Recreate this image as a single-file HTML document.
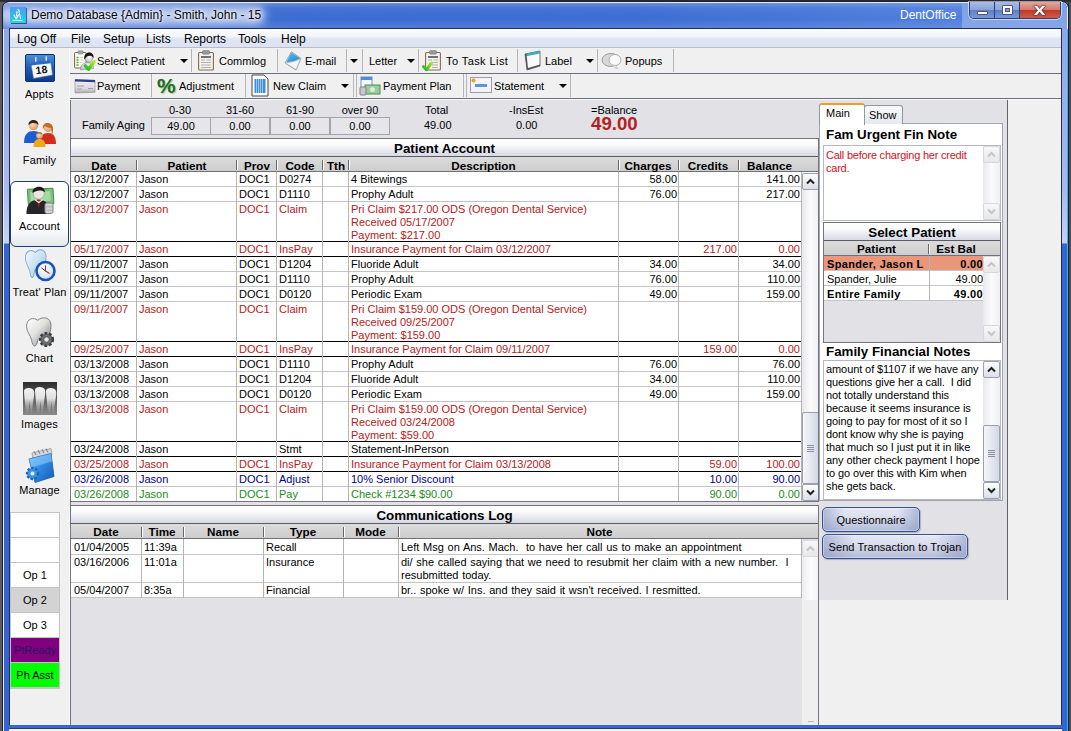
<!DOCTYPE html><html><head><meta charset="utf-8"><title>DentOffice</title><style>
*{box-sizing:border-box;margin:0;padding:0}
html,body{width:1071px;height:731px;overflow:hidden;background:#5c5c5c}
body{font-family:"Liberation Sans",Arial,sans-serif;font-size:11px;color:#000;position:relative}
.a{position:absolute}
.t{position:absolute;white-space:pre;line-height:13px}
.b{font-weight:bold}
.red{color:#b62020}.blue{color:#00008b}.green{color:#228b22}
.hl{position:absolute;height:1px;left:0;right:0}
.vl{position:absolute;width:1px}
.gt{position:absolute;left:0;right:0;text-align:center;font-weight:bold;font-size:13.33px;line-height:19px;background:linear-gradient(#ffffff 0%,#fafafc 35%,#d6d8e4 100%)}
.gh{position:absolute;left:0;right:0;background:linear-gradient(#dcdcdc,#cdcdcd);font-weight:bold;font-size:11.7px}
.hc{position:absolute;top:1px;text-align:center;line-height:16px;white-space:pre}
.hs{position:absolute;top:3px;width:2px;height:10px;border-left:1px solid #666;border-right:1px solid #fff}
.sb{position:absolute;width:17px;background:linear-gradient(90deg,#e8e8ec,#fbfbfd 50%,#f0f0f4)}
.sbb{position:absolute;left:0;width:17px;height:17px;border:1px solid #9aa0b0;border-radius:2px;background:linear-gradient(#fdfdfe,#dcdfe8)}
.sbb.dis{border-color:#d8d8dc;background:linear-gradient(#f8f8f8,#e8e8ea)}
.sbb svg{position:absolute;left:3px;top:4px}
.thumb{position:absolute;left:0;width:17px;border:1px solid #9aa0b0;border-radius:2px;background:linear-gradient(90deg,#f6f6fa,#d4d8e4)}
.btn{position:absolute;height:25px;border:1px solid #34548f;border-radius:5px;background:linear-gradient(90deg,rgba(140,152,196,.6) 0,rgba(200,206,230,0) 22%,rgba(200,206,230,0) 78%,rgba(140,152,196,.6) 100%),linear-gradient(#e6e8f2 0%,#dadded 40%,#b2bad6 100%);text-align:center;line-height:24px;font-size:11px;letter-spacing:.05px;box-shadow:inset 0 0 0 1px rgba(255,255,255,.35),1px 1px 1px rgba(110,120,160,.45)}
.tb{position:absolute;height:25px;left:70px;right:10px;background:#f0f0f0;border-bottom:1px solid #687080;box-shadow:0 1px 0 #fafafa}
.tsep{position:absolute;top:1px;width:1px;height:23px;background:#b4b4bc}
.tt{position:absolute;top:6px;white-space:pre;line-height:13px;font-size:11px}
.dd{position:absolute;top:10px;width:0;height:0;border-left:4px solid transparent;border-right:4px solid transparent;border-top:4px solid #000}
.ml{position:absolute;left:0;width:59px;text-align:center;font-size:11px;letter-spacing:.15px;line-height:13px;white-space:pre}
.lc{position:absolute;left:1px;width:48px;height:25px;border-bottom:1px solid #c4c4c4;text-align:center;line-height:25px;font-size:11px;background:#fff}
</style></head><body>
<div class="a" style="left:0;top:0;width:1071px;height:2px;background:linear-gradient(#262626,#3c3c3c)"></div>
<div class="a" style="left:1068px;top:2px;width:3px;height:729px;background:linear-gradient(90deg,#1c2038,#4a4a4e 40%,#545458)"></div>
<div class="a" style="left:2px;top:1px;width:1067px;height:735px;border-radius:7px 7px 0 0;background:#3464d2;border:1px solid #161e3e;box-shadow:0 0 0 1px #e6ecfb inset"></div>
<div class="a" style="left:3px;top:3px;width:1064px;height:26px;border-radius:6px 6px 0 0;background:linear-gradient(90deg,#4672d4 0%,#3b6bd1 30%,#3d6dd3 60%,#4c7cdc 85%,#5685e0 100%)"></div>
<div class="a" style="left:3px;top:3px;width:1064px;height:26px;border-radius:6px 6px 0 0;background:linear-gradient(rgba(255,255,255,.22) 0,rgba(255,255,255,.05) 20%,rgba(255,255,255,0) 60%,rgba(255,255,255,.12) 100%)"></div>
<div class="a" style="left:3px;top:3px;width:300px;height:26px;overflow:hidden;border-radius:6px 0 0 0"><div class="a" style="left:-6px;top:3px;width:268px;height:19px;border-radius:9px;background:rgba(255,255,255,.66);filter:blur(5px)"></div></div>
<div class="a" style="left:962px;top:3px;width:105px;height:26px;border-radius:0 6px 0 0;background:linear-gradient(#7da2e6,#86a6e8)"></div>
<div class="a" style="left:4px;top:29px;width:5px;height:702px;background:linear-gradient(#8ea8e8 0,#a9baec 160px,#c6d2f3 214px,#3464d2 215px,#3464d2 100%)"></div>
<div class="a" style="left:1062px;top:29px;width:5px;height:702px;background:linear-gradient(#8ea8e8 0,#a9baec 160px,#c6d2f3 214px,#3464d2 215px,#3464d2 100%)"></div>
<div class="a" style="left:1067px;top:29px;width:1px;height:702px;background:#3cb4ee"></div>
<div class="a" style="left:9px;top:725px;width:1053px;height:3px;background:#3468d2"></div>
<div class="a" style="left:9px;top:728px;width:1053px;height:3px;background:#f2f2f2;border-top:1px solid #2a3a5a"></div>
<svg class="a" style="left:10px;top:7px;box-shadow:1px 1px 0 rgba(30,40,80,.7)" width="16" height="16" viewBox="0 0 16 16"><defs><linearGradient id="ig" x1="0" y1="0" x2="0" y2="1"><stop offset="0" stop-color="#4c9ef0"/><stop offset=".5" stop-color="#34b4f0"/><stop offset="1" stop-color="#12dee8"/></linearGradient></defs><rect width="16" height="16" fill="url(#ig)"/><path d="M8 2.5c1.2.6 1.6 1.6 1 3M7 4.5c-.6 2-.6 4 .4 6M4 8l2.2 4 2.6-4.5M9.5 6.500l1 5M3 13.500h9" stroke="#fff" stroke-width="1.100" fill="none" stroke-linecap="round"/></svg>
<div class="t" style="left:31px;top:8px;font-size:12px;line-height:15px;text-shadow:0 0 6px #fff,0 0 3px #fff">Demo Database {Admin} - Smith, John - 15</div>
<div class="t" style="left:900px;top:8px;font-size:12px;line-height:15px;color:#fff">DentOffice</div>
<div class="a" style="left:969px;top:2px;width:92px;height:17px;border:1px solid #2a3f70;border-top:none;border-radius:0 0 5px 5px;overflow:hidden;box-shadow:0 0 0 1px rgba(255,255,255,.55)"><div class="a" style="left:0;top:0;width:25px;height:17px;background:linear-gradient(#a9bce6 0,#8aa3dc 45%,#5d7fcb 50%,#7f9cdc 100%);border-right:1px solid #2a3f70"></div><div class="a" style="left:25px;top:0;width:25px;height:17px;background:linear-gradient(#a9bce6 0,#8aa3dc 45%,#5d7fcb 50%,#7f9cdc 100%);border-right:1px solid #2a3f70"></div><div class="a" style="left:50px;top:0;width:42px;height:17px;background:linear-gradient(#e3a79c 0,#d27a6b 45%,#c03a28 50%,#d4604a 100%)"></div><div class="a" style="left:7px;top:9px;width:11px;height:4px;background:#fff;border:1px solid #505870;border-radius:1px"></div><div class="a" style="left:32px;top:3px;width:11px;height:10px;border:1px solid #505870;background:#fff;border-radius:1px"></div><div class="a" style="left:35px;top:6px;width:5px;height:4px;border:1px solid #505870;background:#7f9cdc"></div><div class="t b" style="left:65px;top:-1.5px;font-size:17px;line-height:18px;color:#fff;transform:scaleX(1.25);transform-origin:50% 50%;-webkit-text-stroke:.7px #4a2626;paint-order:stroke fill;text-shadow:0 0 2px #5a1a1a">x</div></div>
<div class="a" style="left:9px;top:28px;width:1053px;height:697px;background:#f0f0f0;border:1px solid #222c56;border-bottom:none"></div>
<div class="a" style="left:10px;top:29px;width:1051px;height:19px;background:linear-gradient(#fbfcfe 0,#f3f5fb 40%,#dfe5f3 55%,#dde3f2 100%);border-bottom:1px solid #b8bccc"></div>
<div class="t" style="left:17px;top:32px;font-size:12px;line-height:15px">Log Off</div>
<div class="t" style="left:71px;top:32px;font-size:12px;line-height:15px">File</div>
<div class="t" style="left:103px;top:32px;font-size:12px;line-height:15px">Setup</div>
<div class="t" style="left:146px;top:32px;font-size:12px;line-height:15px">Lists</div>
<div class="t" style="left:184px;top:32px;font-size:12px;line-height:15px">Reports</div>
<div class="t" style="left:238px;top:32px;font-size:12px;line-height:15px">Tools</div>
<div class="t" style="left:281px;top:32px;font-size:12px;line-height:15px">Help</div>
<div class="a" id="mod" style="left:10px;top:48px;width:60px;height:677px;background:#f0f0f0">
<div class="a" style="left:0px;top:133px;width:59px;height:66px;border:1px solid #1c3c78;border-radius:6px;background:linear-gradient(#ffffff 0,#ffffff 70%,#e4e6ea 100%)"></div>
<div class="ml" style="top:40px">Appts</div>
<div class="ml" style="top:106px">Family</div>
<div class="ml" style="top:172px">Account</div>
<div class="ml" style="top:238px">Treat&#x27; Plan</div>
<div class="ml" style="top:304px">Chart</div>
<div class="ml" style="top:370px">Images</div>
<div class="ml" style="top:436px">Manage</div>
<svg class="a" style="left:0;top:0" width="60" height="460" viewBox="0 0 60 460"><defs><linearGradient id="ca" x1="0" y1="0" x2="0" y2="1"><stop offset="0" stop-color="#4a90dc"/><stop offset=".5" stop-color="#1c5cb8"/><stop offset="1" stop-color="#0c3a8c"/></linearGradient><linearGradient id="tb" x1="0" y1="0" x2="1" y2="1"><stop offset="0" stop-color="#f4fbff"/><stop offset=".55" stop-color="#c4def2"/><stop offset="1" stop-color="#8cb8dc"/></linearGradient><linearGradient id="tg" x1="0" y1="0" x2="1" y2="1"><stop offset="0" stop-color="#ffffff"/><stop offset=".45" stop-color="#e2e2e0"/><stop offset="1" stop-color="#767674"/></linearGradient><linearGradient id="xr" x1="0" y1="0" x2="0" y2="1"><stop offset="0" stop-color="#2c2c2c"/><stop offset=".5" stop-color="#5c5c5c"/><stop offset="1" stop-color="#8a8a8a"/></linearGradient><linearGradient id="xt" x1="0" y1="0" x2="0" y2="1"><stop offset="0" stop-color="#f4f4f4"/><stop offset=".45" stop-color="#e0e0e0"/><stop offset="1" stop-color="#9a9a9a" stop-opacity=".3"/></linearGradient><linearGradient id="mf" x1="0" y1="0" x2="1" y2="1"><stop offset="0" stop-color="#6cc0f8"/><stop offset=".5" stop-color="#2c88e0"/><stop offset="1" stop-color="#1458b0"/></linearGradient><radialGradient id="ck" cx=".4" cy=".35" r=".7"><stop offset="0" stop-color="#ffffff"/><stop offset="1" stop-color="#c8dcf4"/></radialGradient><radialGradient id="sk" cx=".4" cy=".35" r=".7"><stop offset="0" stop-color="#f8d8b8"/><stop offset="1" stop-color="#d49868"/></radialGradient></defs><g transform="translate(15,6)"><rect x=".5" y=".5" width="29" height="27" rx="1.500" fill="url(#ca)" stroke="#0a3278"/><path d="M5.500 7.500l20-2 2 15.500-19 3.500z" fill="#f6f8fb" stroke="#5a6a88" stroke-width=".6"/><path d="M5.500 7.500l20-2 .5 3.800-20 2.200z" fill="#2d6cc4"/><text x="16.500" y="19.500" font-size="10.500" font-weight="bold" text-anchor="middle" font-family="Liberation Sans,sans-serif" fill="#111" transform="rotate(-7 16 16)">18</text><rect x="10" y="3" width="1.500" height="5" rx=".7" fill="#dfe6f2"/><rect x="20.500" y="2" width="1.500" height="5" rx=".7" fill="#dfe6f2"/></g><g transform="translate(13,70)"><path d="M1 25c0-9 4-12 9.500-12s9.500 3 9.500 12z" fill="#1c5cd0"/><circle cx="10.500" cy="7.500" r="4.800" fill="url(#sk)"/><path d="M5.500 7c-.5-6 10-7 10 0-2-2.500-7-3-10 0z" fill="#3a2418"/><path d="M17 26c0-8 3-11 8-11s8 3 8 11z" fill="#d42c1c"/><circle cx="25" cy="9.500" r="4.500" fill="url(#sk)"/><path d="M20 11c-1.500-8 11-8 10 1 0 3-1 5-1 5l-1-7c-2.500 0-5-1-6-2z" fill="#c86c20"/><path d="M10.500 29c0-6 2.500-8 6-8s6 2 6 8z" fill="#f0a818"/><circle cx="16.500" cy="17.500" r="3.300" fill="url(#sk)"/><path d="M13.500 16.500c0-3.500 6-3.500 6 0-1.500-1.300-4.500-1.300-6 0z" fill="#b06020"/></g><g transform="translate(14.500,136.500) scale(.95)"><path d="M3 5l27-1 1 16-27 1z" fill="#7cc07c" stroke="#3c8c4c"/><path d="M6 8l21-1 .7 10-21 1z" fill="#a4d8a4"/><path d="M2 31c0-11 5-15 12.500-15S27 20 27 31z" fill="#26262a"/><circle cx="15" cy="9.500" r="5.800" fill="#ece6e2" stroke="#8a8480" stroke-width=".5"/><path d="M8.500 9c-1-8 13-9 13-1-3-2.500-9-2.500-13 1z" fill="#1c1c1c"/><path d="M13.300 16l1.700 9 1.700-9z" fill="#b81c1c"/><path d="M11 16l4 3 4-3" stroke="#e8e8e8" stroke-width="1.200" fill="none"/><rect x="21.500" y="19.500" width="8.500" height="11" rx="2" fill="#d4d4d8" stroke="#808088"/><path d="M21.500 23.500h8.500M21.500 27h8.500" stroke="#9a9aa2" stroke-width=".7"/></g><g transform="translate(12,201)"><path transform="translate(2.500,0) scale(.9,1.130)" d="M1 8C1 1 8 0 12 3c4-4 12-3 12 4 0 5-2 8-3 13-1 7-4 7-5 0-1-4-4-4-5 0-1 7-4 7-5 0C5 16 1 13 1 8z" fill="url(#tb)" stroke="#7ca8cc" stroke-width=".9"/><circle cx="23.500" cy="22" r="9" fill="url(#ck)" stroke="#1c50bc" stroke-width="2.600"/><path d="M23.500 16.500v5.500l4 2.500" stroke="#a03030" stroke-width="1.100" fill="none"/><path d="M23.500 22l-4-3" stroke="#333" stroke-width="1" fill="none"/></g><g transform="translate(15,268)"><path transform="translate(-.5,0) scale(1.020,1.060)" d="M2 10C2 2 9 1 13 4c5-4 13-3 13 5 0 5-2 9-3 14-1 7-5 7-6 0-.6-3-3-3-4 0-1 7-5 7-6 0C6 18 2 15 2 10z" fill="url(#tg)" stroke="#7c7c7c" stroke-width=".9"/><circle cx="21.500" cy="23.500" r="6.300" fill="#6c7074" stroke="#3c4044" stroke-width="2.600" stroke-dasharray="2.600 1.900"/><circle cx="21.500" cy="23.500" r="2.600" fill="#e8e8e8" stroke="#3c4044" stroke-width=".6"/></g><g transform="translate(13,334)"><rect width="34" height="33" fill="url(#xr)"/><path d="M1 9c0-4 9-4 10 0 1 4-1 8-2 22H7.500L6.500 19 5.500 31H3C2 19 1 13 1 9zM12 8c0-4 9-4 10 0 1 4-1 8-2 23h-1.500L17.500 19l-1 12H14c-1-12-2-19-2-23zM23 9c0-4 9-4 10 0 1 4-1 8-2 22h-1.500L28.500 19l-1 12H25c-1-12-2-18-2-22z" fill="url(#xt)"/></g><g transform="translate(14,400)"><path d="M8 5l19-4.500 1 6-19 5z" fill="#d4d8dc" stroke="#8a9098" stroke-width=".7"/><path d="M10 3l2 4M14 2l2 4M18 1.200l2 4M22 .5l2 4" stroke="#70767e" stroke-width=".9"/><path d="M5 11l22-5.500 3 23-19 6z" fill="url(#mf)" stroke="#1458a8" stroke-width=".8"/><path d="M5 11l22-5.500 1 8-21 6z" fill="#8cd0fc" opacity=".55"/><circle cx="8.500" cy="25.500" r="5.500" fill="#3c94e4" stroke="#1c64b8" stroke-width="2.400" stroke-dasharray="2.300 1.700"/><circle cx="8.500" cy="25.500" r="2" fill="#dcecfa"/></g></svg>
<div class="a" style="left:0px;top:464px;width:50px;height:177px;border:1px solid #c4c4c4;background:#fff"></div>
<div class="lc" style="top:465px;background:#fff;color:#000"></div>
<div class="lc" style="top:490px;background:#fff;color:#000"></div>
<div class="lc" style="top:515px;background:#fff;color:#000">Op 1</div>
<div class="lc" style="top:540px;background:#d3d3d3;color:#000">Op 2</div>
<div class="lc" style="top:565px;background:#fff;color:#000">Op 3</div>
<div class="lc" style="top:590px;background:#800080;color:#2a1460">PtReady</div>
<div class="lc" style="top:615px;background:#00ff00;color:#000">Ph Asst</div>
</div>
<div class="a" style="left:69px;top:48px;width:2px;height:677px;background:linear-gradient(90deg,#fafafa 0,#fafafa 50%,#74747e 50%)"></div>
<div class="tb" style="top:48px;height:26px"></div><div class="tb" style="top:74px"></div>
<svg class="a" style="left:74px;top:50px" width="22" height="22" viewBox="0 0 22 22"><defs><linearGradient id="ck1" x1="0" y1="1" x2="1" y2="0"><stop offset="0" stop-color="#18b428"/><stop offset="1" stop-color="#b0ec20"/></linearGradient><radialGradient id="fc" cx=".6" cy=".4" r=".7"><stop offset="0" stop-color="#ffffff"/><stop offset="1" stop-color="#b8b8bc"/></radialGradient></defs><rect x=".6" y="2.500" width="11.500" height="15.500" rx=".8" fill="#fbfbf8" stroke="#8a5c3c" stroke-width="1"/><rect x="4" y=".8" width="5" height="3.200" rx=".8" fill="#a8a8a8" stroke="#707070" stroke-width=".5"/><path d="M2.500 7.500h2M2.500 10h2M2.500 12.500h2M2.500 15h2" stroke="#30c030" stroke-width="1.300"/><path d="M5.500 7.500h4M5.500 10h4M5.500 12.500h3" stroke="#c8c8c8" stroke-width=".8"/><path d="M6.500 20c0-5 3-7.500 7-7.500s6 2 6 6z" fill="url(#fc)" stroke="#8c8c90" stroke-width=".6"/><ellipse cx="14.800" cy="7.800" rx="3.800" ry="4.600" fill="url(#fc)" stroke="#77777c" stroke-width=".5"/><path d="M10.400 9.500c-1.600-9 10.200-9.400 9.200-1.200-.8-2-2.200-2.800-4-2.600-2.400.2-3.600 1.400-5.200 3.800z" fill="#141414"/><path d="M11.500 15.800l3 3.400 5.600-7.400" stroke="url(#ck1)" stroke-width="3.400" fill="none" stroke-linecap="round" stroke-linejoin="round"/></svg>
<div class="tt" style="left:97px;top:55px">Select Patient</div>
<div class="dd" style="left:180px;top:59px"></div>
<div class="tsep" style="left:191px;top:49px"></div>
<svg class="a" style="left:198px;top:50px" width="16" height="21" viewBox="0 0 16 21"><rect x=".6" y="2.500" width="14.800" height="17.500" rx="1" fill="#f2f2ee" stroke="#8a6a48" stroke-width="1.100"/><rect x="4.500" y=".6" width="7" height="3.600" rx="1" fill="#9a9a9a" stroke="#6a6a6a" stroke-width=".5"/><rect x="3" y="6" width="10" height="2" fill="#707070"/><path d="M3 10h4M8.500 10h4.500M3 12.500h10M3 15h10M3 17.500h10" stroke="#a8a8a8" stroke-width=".9"/></svg>
<div class="tt" style="left:219px;top:55px">Commlog</div>
<div class="tsep" style="left:277px;top:49px"></div>
<svg class="a" style="left:284px;top:51px" width="18" height="20" viewBox="0 0 18 20"><defs><linearGradient id="em" x1="0" y1="0" x2="1" y2="1"><stop offset="0" stop-color="#58c0f4"/><stop offset="1" stop-color="#1c84d4"/></linearGradient></defs><path d="M7.500 .8L17 7.500 12 19 1 12z" fill="#eef0f3" stroke="#8c949c" stroke-width=".9"/><path d="M7.500 1.500L16 7.500 9.500 11 2.500 11z" fill="url(#em)"/><path d="M1.500 12L9.500 10.500 16.500 8 12 18.500z" fill="#f4f5f7" stroke="#a8aeb6" stroke-width=".6"/><path d="M1.500 12l8 -1.500 7-2.500" fill="none" stroke="#b8bec6" stroke-width=".7"/></svg>
<div class="tt" style="left:305px;top:55px">E-mail</div>
<div class="tsep" style="left:346px;top:49px"></div>
<div class="dd" style="left:350px;top:59px"></div>
<div class="tsep" style="left:362px;top:49px"></div>
<div class="tt" style="left:369px;top:55px">Letter</div>
<div class="dd" style="left:407px;top:59px"></div>
<div class="tsep" style="left:418px;top:49px"></div>
<svg class="a" style="left:421px;top:50px" width="20" height="22" viewBox="0 0 20 22"><defs><linearGradient id="ck2" x1="0" y1="1" x2="1" y2="0"><stop offset="0" stop-color="#18b428"/><stop offset="1" stop-color="#a8e820"/></linearGradient></defs><rect x="4.600" y="2.500" width="14.800" height="17.500" rx="1" fill="#f2f2ee" stroke="#8a6a48" stroke-width="1.100"/><rect x="8.500" y=".6" width="7" height="3.600" rx="1" fill="#9a9a9a" stroke="#6a6a6a" stroke-width=".5"/><rect x="7" y="6" width="10" height="2" fill="#707070"/><path d="M7 10h4M12.500 10h4.500M11 12.500h6M11 15h6M11 17.500h6" stroke="#a8a8a8" stroke-width=".9"/><path d="M2.500 16.500l3 3.200 5-6.700" stroke="url(#ck2)" stroke-width="3" fill="none" stroke-linecap="round" stroke-linejoin="round"/></svg>
<div class="tt" style="left:446px;top:55px"><span style="letter-spacing:.42px">To Task List</span></div>
<div class="tsep" style="left:517px;top:49px"></div>
<svg class="a" style="left:522px;top:49px" width="22" height="23" viewBox="0 0 22 23"><path d="M3 5l15-3v15l-13 4z" fill="#fbfbfd" stroke="#70747c"/><path d="M3 5l15-3v2.500l-15 3z" fill="#3cb0b8"/><path d="M3 5l2 16 13-4v-1.500l-12 3.500-1.500-14z" fill="#555"/></svg>
<div class="tt" style="left:545px;top:55px">Label</div>
<div class="dd" style="left:586px;top:59px"></div>
<div class="tsep" style="left:597px;top:49px"></div>
<svg class="a" style="left:601px;top:52px" width="22" height="18" viewBox="0 0 22 18"><ellipse cx="10" cy="8" rx="9" ry="6.500" fill="#d8d8d8" stroke="#9a9a9a"/><ellipse cx="14" cy="8" rx="6" ry="5.500" fill="#f8f8f8" stroke="#b0b0b0"/><path d="M14 13l3 4-6-3z" fill="#f0f0f0" stroke="#b0b0b0" stroke-width=".6"/></svg>
<div class="tt" style="left:625px;top:55px">Popups</div>
<div class="tsep" style="left:673px;top:49px"></div>
<svg class="a" style="left:74px;top:78px" width="22" height="16" viewBox="0 0 22 16"><defs><linearGradient id="pg" x1="0" y1="0" x2="0" y2="1"><stop offset="0" stop-color="#f0f0f2"/><stop offset=".7" stop-color="#d8d8da"/><stop offset="1" stop-color="#a8a8ac"/></linearGradient></defs><path d="M1 1.500l20 .8v12l-20 .7z" fill="url(#pg)" stroke="#8c8c94" stroke-width=".6"/><path d="M1 1.300l20 .8v2.200l-20-.8z" fill="#2c3c94"/><path d="M3 8h7M3 11h5M14 10.500h5" stroke="#a0a0a8" stroke-width="1"/></svg>
<div class="tt" style="left:97px;top:80px">Payment</div>
<div class="tsep" style="left:151px;top:74px"></div>
<div class="t b" style="left:157px;top:74px;font-size:21px;line-height:23px;color:#1c6c1c;text-shadow:1px 1px 1px #a8c8a8">%</div>
<div class="tt" style="left:179px;top:80px">Adjustment</div>
<div class="tsep" style="left:245px;top:74px"></div>
<svg class="a" style="left:251px;top:74px" width="18" height="23" viewBox="0 0 18 23"><path d="M1 1h12l4 4v17H1z" fill="#fff" stroke="#444"/><rect x="3.500" y="5" width="11" height="14" fill="#3c8ce0"/><path d="M5.500 5v14M7.500 5v14M9.500 5v14M11.500 5v14" stroke="#b8d8f8" stroke-width=".8"/></svg>
<div class="tt" style="left:273px;top:80px">New Claim</div>
<div class="dd" style="left:341px;top:84px"></div>
<div class="tsep" style="left:353px;top:74px"></div>
<div class="tsep" style="left:356px;top:74px"></div>
<svg class="a" style="left:359px;top:75px" width="22" height="21" viewBox="0 0 22 21"><rect x="2" y="2" width="11" height="13" fill="#f4f8fc" stroke="#7890b0"/><rect x="2" y="2" width="11" height="3" fill="#4c8cd8"/><rect x="6" y="10" width="15" height="9" fill="#9ccc9c" stroke="#4c8c5c"/><circle cx="13.500" cy="14.500" r="2.500" fill="#d8ecd8"/><rect x="1" y="12" width="6" height="8" rx="1" fill="#c8c8cc" stroke="#808088"/></svg>
<div class="tt" style="left:383px;top:80px">Payment Plan</div>
<div class="tsep" style="left:463px;top:74px"></div>
<div class="tsep" style="left:466px;top:74px"></div>
<svg class="a" style="left:470px;top:77px" width="22" height="17" viewBox="0 0 22 17"><rect x=".5" y=".5" width="21" height="15" fill="#f4f4f6" stroke="#9a9ea8"/><rect x="5" y="7" width="12" height="3" fill="#5c94e0"/><circle cx="3.500" cy="3.500" r="2" fill="#f0a020"/></svg>
<div class="tt" style="left:494px;top:80px">Statement</div>
<div class="dd" style="left:559px;top:84px"></div>
<div class="tsep" style="left:570px;top:74px"></div>
<div class="a" style="left:71px;top:100px;width:937px;height:500px;background:#e1e1e6;border-right:1.500px solid #62626e"></div>
<div class="t" style="left:150px;width:60px;text-align:center;top:104px">0-30</div>
<div class="t" style="left:210px;width:60px;text-align:center;top:104px">31-60</div>
<div class="t" style="left:270px;width:60px;text-align:center;top:104px">61-90</div>
<div class="t" style="left:330px;width:60px;text-align:center;top:104px">over 90</div>
<div class="t" style="left:151px;width:60px;height:18px;top:117px;text-align:center;line-height:16px;border:1px solid #a4a4ac;background:#e6e6ea">49.00</div>
<div class="t" style="left:210px;width:60px;height:18px;top:117px;text-align:center;line-height:16px;border:1px solid #a4a4ac;background:#e6e6ea">0.00</div>
<div class="t" style="left:270px;width:60px;height:18px;top:117px;text-align:center;line-height:16px;border:1px solid #a4a4ac;background:#e6e6ea">0.00</div>
<div class="t" style="left:330px;width:60px;height:18px;top:117px;text-align:center;line-height:16px;border:1px solid #a4a4ac;background:#e6e6ea">0.00</div>
<div class="t" style="left:82px;top:119px">Family Aging</div>
<div class="t" style="left:425px;top:104px">Total</div><div class="t" style="left:424px;top:119px">49.00</div>
<div class="t" style="left:509px;top:104px">-InsEst</div><div class="t" style="left:516px;top:119px">0.00</div>
<div class="t" style="left:591px;top:104px">=Balance</div><div class="t b" style="left:591px;top:113px;font-size:18.67px;line-height:22px;color:#b22222">49.00</div>
<div class="a" id="acct" style="left:70px;top:138px;width:749px;height:364px;background:#fff;border:1px solid #74747e;overflow:hidden">
<div class="gt" style="top:0;height:18px;border-bottom:1px solid #5c5c66">Patient Account</div>
<div class="gh" style="top:18px;height:15px;border-bottom:1px solid #70707a">
<div class="hc" style="left:0px;width:66px">Date</div>
<div class="hs" style="left:65px"></div>
<div class="hc" style="left:66px;width:100px">Patient</div>
<div class="hs" style="left:165px"></div>
<div class="hc" style="left:166px;width:40px">Prov</div>
<div class="hs" style="left:205px"></div>
<div class="hc" style="left:206px;width:46px">Code</div>
<div class="hs" style="left:251px"></div>
<div class="hc" style="left:252px;width:26px">Tth</div>
<div class="hs" style="left:277px"></div>
<div class="hc" style="left:278px;width:269px">Description</div>
<div class="hs" style="left:547px"></div>
<div class="hc" style="left:547px;width:60px">Charges</div>
<div class="hs" style="left:607px"></div>
<div class="hc" style="left:607px;width:60px">Credits</div>
<div class="hs" style="left:667px"></div>
<div class="hc" style="left:667px;width:63px">Balance</div>
</div>
<div class="a " style="left:0;top:33px;width:731px;height:15px;border-bottom:1px solid #c4c4c4">
<div class="t" style="left:3px;top:1px">03/12/2007</div>
<div class="t" style="left:68px;top:1px">Jason</div>
<div class="t" style="left:168px;top:1px">DOC1</div>
<div class="t" style="left:208px;top:1px">D0274</div>
<div class="t" style="left:280px;top:1px">4 Bitewings</div>
<div class="t" style="left:547px;width:59px;text-align:right;top:1px">58.00</div>
<div class="t" style="left:667px;width:62px;text-align:right;top:1px">141.00</div>
</div>
<div class="a " style="left:0;top:48px;width:731px;height:15px;border-bottom:1px solid #c4c4c4">
<div class="t" style="left:3px;top:1px">03/12/2007</div>
<div class="t" style="left:68px;top:1px">Jason</div>
<div class="t" style="left:168px;top:1px">DOC1</div>
<div class="t" style="left:208px;top:1px">D1110</div>
<div class="t" style="left:280px;top:1px">Prophy Adult</div>
<div class="t" style="left:547px;width:59px;text-align:right;top:1px">76.00</div>
<div class="t" style="left:667px;width:62px;text-align:right;top:1px">217.00</div>
</div>
<div class="a red" style="left:0;top:63px;width:731px;height:40px;border-bottom:1px solid #000">
<div class="t" style="left:3px;top:1px">03/12/2007</div>
<div class="t" style="left:68px;top:1px">Jason</div>
<div class="t" style="left:168px;top:1px">DOC1</div>
<div class="t" style="left:208px;top:1px">Claim</div>
<div class="t" style="left:280px;top:1px">Pri Claim $217.00 ODS (Oregon Dental Service)
Received 05/17/2007
Payment: $217.00</div>
</div>
<div class="a red" style="left:0;top:103px;width:731px;height:15px;border-bottom:1px solid #000">
<div class="t" style="left:3px;top:1px">05/17/2007</div>
<div class="t" style="left:68px;top:1px">Jason</div>
<div class="t" style="left:168px;top:1px">DOC1</div>
<div class="t" style="left:208px;top:1px">InsPay</div>
<div class="t" style="left:280px;top:1px">Insurance Payment for Claim 03/12/2007</div>
<div class="t" style="left:607px;width:59px;text-align:right;top:1px">217.00</div>
<div class="t" style="left:667px;width:62px;text-align:right;top:1px">0.00</div>
</div>
<div class="a " style="left:0;top:118px;width:731px;height:15px;border-bottom:1px solid #c4c4c4">
<div class="t" style="left:3px;top:1px">09/11/2007</div>
<div class="t" style="left:68px;top:1px">Jason</div>
<div class="t" style="left:168px;top:1px">DOC1</div>
<div class="t" style="left:208px;top:1px">D1204</div>
<div class="t" style="left:280px;top:1px">Fluoride Adult</div>
<div class="t" style="left:547px;width:59px;text-align:right;top:1px">34.00</div>
<div class="t" style="left:667px;width:62px;text-align:right;top:1px">34.00</div>
</div>
<div class="a " style="left:0;top:133px;width:731px;height:15px;border-bottom:1px solid #c4c4c4">
<div class="t" style="left:3px;top:1px">09/11/2007</div>
<div class="t" style="left:68px;top:1px">Jason</div>
<div class="t" style="left:168px;top:1px">DOC1</div>
<div class="t" style="left:208px;top:1px">D1110</div>
<div class="t" style="left:280px;top:1px">Prophy Adult</div>
<div class="t" style="left:547px;width:59px;text-align:right;top:1px">76.00</div>
<div class="t" style="left:667px;width:62px;text-align:right;top:1px">110.00</div>
</div>
<div class="a " style="left:0;top:148px;width:731px;height:15px;border-bottom:1px solid #c4c4c4">
<div class="t" style="left:3px;top:1px">09/11/2007</div>
<div class="t" style="left:68px;top:1px">Jason</div>
<div class="t" style="left:168px;top:1px">DOC1</div>
<div class="t" style="left:208px;top:1px">D0120</div>
<div class="t" style="left:280px;top:1px">Periodic Exam</div>
<div class="t" style="left:547px;width:59px;text-align:right;top:1px">49.00</div>
<div class="t" style="left:667px;width:62px;text-align:right;top:1px">159.00</div>
</div>
<div class="a red" style="left:0;top:163px;width:731px;height:40px;border-bottom:1px solid #000">
<div class="t" style="left:3px;top:1px">09/11/2007</div>
<div class="t" style="left:68px;top:1px">Jason</div>
<div class="t" style="left:168px;top:1px">DOC1</div>
<div class="t" style="left:208px;top:1px">Claim</div>
<div class="t" style="left:280px;top:1px">Pri Claim $159.00 ODS (Oregon Dental Service)
Received 09/25/2007
Payment: $159.00</div>
</div>
<div class="a red" style="left:0;top:203px;width:731px;height:15px;border-bottom:1px solid #000">
<div class="t" style="left:3px;top:1px">09/25/2007</div>
<div class="t" style="left:68px;top:1px">Jason</div>
<div class="t" style="left:168px;top:1px">DOC1</div>
<div class="t" style="left:208px;top:1px">InsPay</div>
<div class="t" style="left:280px;top:1px">Insurance Payment for Claim 09/11/2007</div>
<div class="t" style="left:607px;width:59px;text-align:right;top:1px">159.00</div>
<div class="t" style="left:667px;width:62px;text-align:right;top:1px">0.00</div>
</div>
<div class="a " style="left:0;top:218px;width:731px;height:15px;border-bottom:1px solid #c4c4c4">
<div class="t" style="left:3px;top:1px">03/13/2008</div>
<div class="t" style="left:68px;top:1px">Jason</div>
<div class="t" style="left:168px;top:1px">DOC1</div>
<div class="t" style="left:208px;top:1px">D1110</div>
<div class="t" style="left:280px;top:1px">Prophy Adult</div>
<div class="t" style="left:547px;width:59px;text-align:right;top:1px">76.00</div>
<div class="t" style="left:667px;width:62px;text-align:right;top:1px">76.00</div>
</div>
<div class="a " style="left:0;top:233px;width:731px;height:15px;border-bottom:1px solid #c4c4c4">
<div class="t" style="left:3px;top:1px">03/13/2008</div>
<div class="t" style="left:68px;top:1px">Jason</div>
<div class="t" style="left:168px;top:1px">DOC1</div>
<div class="t" style="left:208px;top:1px">D1204</div>
<div class="t" style="left:280px;top:1px">Fluoride Adult</div>
<div class="t" style="left:547px;width:59px;text-align:right;top:1px">34.00</div>
<div class="t" style="left:667px;width:62px;text-align:right;top:1px">110.00</div>
</div>
<div class="a " style="left:0;top:248px;width:731px;height:15px;border-bottom:1px solid #c4c4c4">
<div class="t" style="left:3px;top:1px">03/13/2008</div>
<div class="t" style="left:68px;top:1px">Jason</div>
<div class="t" style="left:168px;top:1px">DOC1</div>
<div class="t" style="left:208px;top:1px">D0120</div>
<div class="t" style="left:280px;top:1px">Periodic Exam</div>
<div class="t" style="left:547px;width:59px;text-align:right;top:1px">49.00</div>
<div class="t" style="left:667px;width:62px;text-align:right;top:1px">159.00</div>
</div>
<div class="a red" style="left:0;top:263px;width:731px;height:40px;border-bottom:1px solid #000">
<div class="t" style="left:3px;top:1px">03/13/2008</div>
<div class="t" style="left:68px;top:1px">Jason</div>
<div class="t" style="left:168px;top:1px">DOC1</div>
<div class="t" style="left:208px;top:1px">Claim</div>
<div class="t" style="left:280px;top:1px">Pri Claim $159.00 ODS (Oregon Dental Service)
Received 03/24/2008
Payment: $59.00</div>
</div>
<div class="a " style="left:0;top:303px;width:731px;height:15px;border-bottom:1px solid #000">
<div class="t" style="left:3px;top:1px">03/24/2008</div>
<div class="t" style="left:68px;top:1px">Jason</div>
<div class="t" style="left:208px;top:1px">Stmt</div>
<div class="t" style="left:280px;top:1px">Statement-InPerson</div>
</div>
<div class="a red" style="left:0;top:318px;width:731px;height:15px;border-bottom:1px solid #000">
<div class="t" style="left:3px;top:1px">03/25/2008</div>
<div class="t" style="left:68px;top:1px">Jason</div>
<div class="t" style="left:168px;top:1px">DOC1</div>
<div class="t" style="left:208px;top:1px">InsPay</div>
<div class="t" style="left:280px;top:1px">Insurance Payment for Claim 03/13/2008</div>
<div class="t" style="left:607px;width:59px;text-align:right;top:1px">59.00</div>
<div class="t" style="left:667px;width:62px;text-align:right;top:1px">100.00</div>
</div>
<div class="a blue" style="left:0;top:333px;width:731px;height:15px;border-bottom:1px solid #c4c4c4">
<div class="t" style="left:3px;top:1px">03/26/2008</div>
<div class="t" style="left:68px;top:1px">Jason</div>
<div class="t" style="left:168px;top:1px">DOC1</div>
<div class="t" style="left:208px;top:1px">Adjust</div>
<div class="t" style="left:280px;top:1px">10% Senior Discount</div>
<div class="t" style="left:607px;width:59px;text-align:right;top:1px">10.00</div>
<div class="t" style="left:667px;width:62px;text-align:right;top:1px">90.00</div>
</div>
<div class="a green" style="left:0;top:348px;width:731px;height:15px;border-bottom:1px solid #fff">
<div class="t" style="left:3px;top:1px">03/26/2008</div>
<div class="t" style="left:68px;top:1px">Jason</div>
<div class="t" style="left:168px;top:1px">DOC1</div>
<div class="t" style="left:208px;top:1px">Pay</div>
<div class="t" style="left:280px;top:1px">Check #1234 $90.00</div>
<div class="t" style="left:607px;width:59px;text-align:right;top:1px">90.00</div>
<div class="t" style="left:667px;width:62px;text-align:right;top:1px">0.00</div>
</div>
<div class="vl" style="left:65px;top:33px;height:330px;background:#b4b4b4"></div>
<div class="vl" style="left:165px;top:33px;height:330px;background:#b4b4b4"></div>
<div class="vl" style="left:205px;top:33px;height:330px;background:#b4b4b4"></div>
<div class="vl" style="left:251px;top:33px;height:330px;background:#b4b4b4"></div>
<div class="vl" style="left:277px;top:33px;height:330px;background:#b4b4b4"></div>
<div class="vl" style="left:547px;top:33px;height:330px;background:#b4b4b4"></div>
<div class="vl" style="left:607px;top:33px;height:330px;background:#b4b4b4"></div>
<div class="vl" style="left:667px;top:33px;height:330px;background:#b4b4b4"></div>
<div class="vl" style="left:730px;top:33px;height:330px;background:#b4b4b4"></div>
<div class="sb" style="left:731px;top:34px;height:328px"><div class="sbb" style="top:0"><svg width="9" height="7" viewBox="0 0 9 7"><path d="M1 5.500l3.500-3.500 3.500 3.500" stroke="#222" stroke-width="2" fill="none"/></svg></div><div class="sbb" style="top:311px"><svg width="9" height="7" viewBox="0 0 9 7"><path d="M1 1.500l3.500 3.500 3.500-3.500" stroke="#222" stroke-width="2" fill="none"/></svg></div><div class="thumb" style="top:239px;height:72px"><div class="a" style="left:4px;top:32px;width:7px;height:7px;background:repeating-linear-gradient(#8890a0 0,#8890a0 1px,transparent 1px,transparent 2px)"></div></div></div>
</div>
<div class="a" id="comm" style="left:70px;top:505px;width:749px;height:220px;background:#e1e1e6;border:1px solid #74747e;border-bottom:none;overflow:hidden">
<div class="gt" style="top:0;height:18px;border-bottom:1px solid #5c5c66">Communications Log</div>
<div class="gh" style="top:18px;height:15px;border-bottom:1px solid #70707a">
<div class="hc" style="left:0px;width:70px;top:0">Date</div>
<div class="hs" style="left:70px"></div>
<div class="hc" style="left:70px;width:42px;top:0">Time</div>
<div class="hs" style="left:112px"></div>
<div class="hc" style="left:112px;width:80px;top:0">Name</div>
<div class="hs" style="left:192px"></div>
<div class="hc" style="left:192px;width:80px;top:0">Type</div>
<div class="hs" style="left:272px"></div>
<div class="hc" style="left:272px;width:55px;top:0">Mode</div>
<div class="hs" style="left:327px"></div>
<div class="hc" style="left:327px;width:403px;top:0">Note</div>
</div>
<div class="a" style="left:0;top:33px;width:731px;height:16px;background:#fff;border-bottom:1px solid #c4c4c4">
<div class="t" style="left:3px;top:2px">01/04/2005</div><div class="t" style="left:73px;top:2px">11:39a</div><div class="t" style="left:195px;top:2px">Recall</div>
<div class="t" style="left:330px;top:2px;word-spacing:.65px">Left Msg on Ans. Mach.  to have her call us to make an appointment</div>
</div>
<div class="a" style="left:0;top:49px;width:731px;height:28px;background:#fff;border-bottom:1px solid #c4c4c4">
<div class="t" style="left:3px;top:1px">03/16/2006</div><div class="t" style="left:73px;top:1px">11:01a</div><div class="t" style="left:195px;top:1px">Insurance</div>
<div class="t" style="left:330px;top:1px;word-spacing:.65px">di/ she called saying that we need to resubmit her claim with a new number.  I
resubmitted today.</div>
</div>
<div class="a" style="left:0;top:77px;width:731px;height:15px;background:#fff;border-bottom:1px solid #c4c4c4">
<div class="t" style="left:3px;top:1px">05/04/2007</div><div class="t" style="left:73px;top:1px">8:35a</div><div class="t" style="left:195px;top:1px">Financial</div>
<div class="t" style="left:330px;top:1px;word-spacing:.65px">br.. spoke w/ Ins. and they said it wsn&#x27;t received. I resmitted.</div>
</div>
<div class="vl" style="left:70px;top:33px;height:59px;background:#b4b4b4"></div>
<div class="vl" style="left:112px;top:33px;height:59px;background:#b4b4b4"></div>
<div class="vl" style="left:192px;top:33px;height:59px;background:#b4b4b4"></div>
<div class="vl" style="left:272px;top:33px;height:59px;background:#b4b4b4"></div>
<div class="vl" style="left:327px;top:33px;height:59px;background:#b4b4b4"></div>
<div class="vl" style="left:730px;top:33px;height:59px;background:#b4b4b4"></div>
<div class="a" style="left:731px;top:34px;width:17px;height:60px;background:linear-gradient(90deg,#ececf0,#fbfbfd 50%,#f4f4f8)"></div>
<div class="a" style="left:731px;top:94px;width:17px;height:126px;background:#efeff0"></div>
<div class="sbb dis" style="left:731px;top:34px"><svg width="9" height="7" viewBox="0 0 9 7"><path d="M1 5.500l3.500-3.500 3.500 3.500" stroke="#c4c4c8" stroke-width="2" fill="none"/></svg></div>
<div class="a" style="left:737px;top:215px;width:6px;height:1px;background:#b8b8bc"></div>
</div>
<div class="a" style="left:819px;top:123px;width:184px;height:378px;background:#fff;border:1px solid #a0a4b4"></div>
<div class="a" style="left:864px;top:105px;width:39px;height:19px;border:1px solid #9098a8;border-bottom:none;border-radius:3px 3px 0 0;background:linear-gradient(#fafafc,#e6e8ee)"></div>
<div class="t" style="left:869px;top:109px">Show</div>
<div class="a" style="left:819px;top:103px;width:46px;height:22px;border:1px solid #9098a8;border-bottom:none;border-radius:3px 3px 0 0;background:#fff;border-top:2px solid #e8a030"></div>
<div class="t" style="left:826px;top:107px">Main</div>
<div class="t b" style="left:826px;top:126px;font-size:13.33px;line-height:17px">Fam Urgent Fin Note</div>
<div class="a" style="left:823px;top:145px;width:178px;height:76px;background:#fff;border:1px solid #b4b8c4"></div>
<div class="t" style="left:826px;top:149px;color:#d41022;letter-spacing:-.22px">Call before charging her credit
card.</div>
<div class="sb" style="left:983px;top:146px;height:74px"><div class="sbb dis" style="top:0"><svg width="9" height="7" viewBox="0 0 9 7"><path d="M1 5.500l3.500-3.500 3.500 3.500" stroke="#c4c4c8" stroke-width="2" fill="none"/></svg></div><div class="sbb dis" style="top:57px"><svg width="9" height="7" viewBox="0 0 9 7"><path d="M1 1.500l3.500 3.500 3.500-3.500" stroke="#c4c4c8" stroke-width="2" fill="none"/></svg></div></div>
<div class="a" style="left:823px;top:222px;width:178px;height:121px;background:#e1e1e6;border:1px solid #74747e;overflow:hidden">
<div class="gt" style="top:0;height:18px;border-bottom:1px solid #5c5c66">Select Patient</div>
<div class="gh" style="top:18px;height:15px;border-bottom:1px solid #70707a"><div class="hc" style="left:0;width:105px;top:0">Patient</div><div class="hs" style="left:104px"></div><div class="hc" style="left:105px;width:54px;top:0">Est Bal</div></div>
<div class="a" style="left:0;top:33px;width:160px;height:15px;background:#e9967a;border-bottom:1px solid #c4c4c4;font-weight:bold;letter-spacing:.35px;"><div class="t" style="left:3px;top:2px">Spander, Jason L</div><div class="t" style="left:105px;width:54px;text-align:right;top:2px">0.00</div></div>
<div class="a" style="left:0;top:48px;width:160px;height:15px;background:#fff;border-bottom:1px solid #c4c4c4;"><div class="t" style="left:3px;top:2px">Spander, Julie</div><div class="t" style="left:105px;width:54px;text-align:right;top:2px">49.00</div></div>
<div class="a" style="left:0;top:63px;width:160px;height:15px;background:#fff;border-bottom:1px solid #c4c4c4;font-weight:bold;letter-spacing:.35px;"><div class="t" style="left:3px;top:2px">Entire Family</div><div class="t" style="left:105px;width:54px;text-align:right;top:2px">49.00</div></div>
<div class="vl" style="left:105px;top:33px;height:45px;background:#b4b4b4"></div>
<div class="vl" style="left:159px;top:33px;height:45px;background:#b4b4b4"></div>
<div class="sb" style="left:159px;top:33px;height:86px"><div class="sbb dis" style="top:0"><svg width="9" height="7" viewBox="0 0 9 7"><path d="M1 5.500l3.500-3.500 3.500 3.500" stroke="#c4c4c8" stroke-width="2" fill="none"/></svg></div><div class="sbb dis" style="top:69px"><svg width="9" height="7" viewBox="0 0 9 7"><path d="M1 1.500l3.500 3.500 3.500-3.500" stroke="#c4c4c8" stroke-width="2" fill="none"/></svg></div></div>
</div>
<div class="t b" style="left:826px;top:343px;font-size:13.33px;line-height:17px">Family Financial Notes</div>
<div class="a" style="left:823px;top:360px;width:178px;height:140px;background:#fff;border:1px solid #b4b8c4"></div>
<div class="t" style="left:826px;top:363px;letter-spacing:-.09px">amount of $1107 if we have any
questions give her a call.  I did
not totally understand this
because it seems insurance is
going to pay for most of it so I
dont know why she is paying
that much so I just put it in like
any other check payment I hope
to go over this with Kim when
she gets back.</div>
<div class="sb" style="left:983px;top:361px;height:138px"><div class="sbb" style="top:0"><svg width="9" height="7" viewBox="0 0 9 7"><path d="M1 5.500l3.500-3.500 3.500 3.500" stroke="#222" stroke-width="2" fill="none"/></svg></div><div class="sbb" style="top:121px"><svg width="9" height="7" viewBox="0 0 9 7"><path d="M1 1.500l3.500 3.500 3.500-3.500" stroke="#222" stroke-width="2" fill="none"/></svg></div><div class="thumb" style="top:64px;height:57px"><div class="a" style="left:4px;top:24px;width:7px;height:7px;background:repeating-linear-gradient(#8890a0 0,#8890a0 1px,transparent 1px,transparent 2px)"></div></div></div>
<div class="btn" style="left:822px;top:507px;width:98px">Questionnaire</div>
<div class="btn" style="left:822px;top:534px;width:146px">Send Transaction to Trojan</div>
</body></html>
